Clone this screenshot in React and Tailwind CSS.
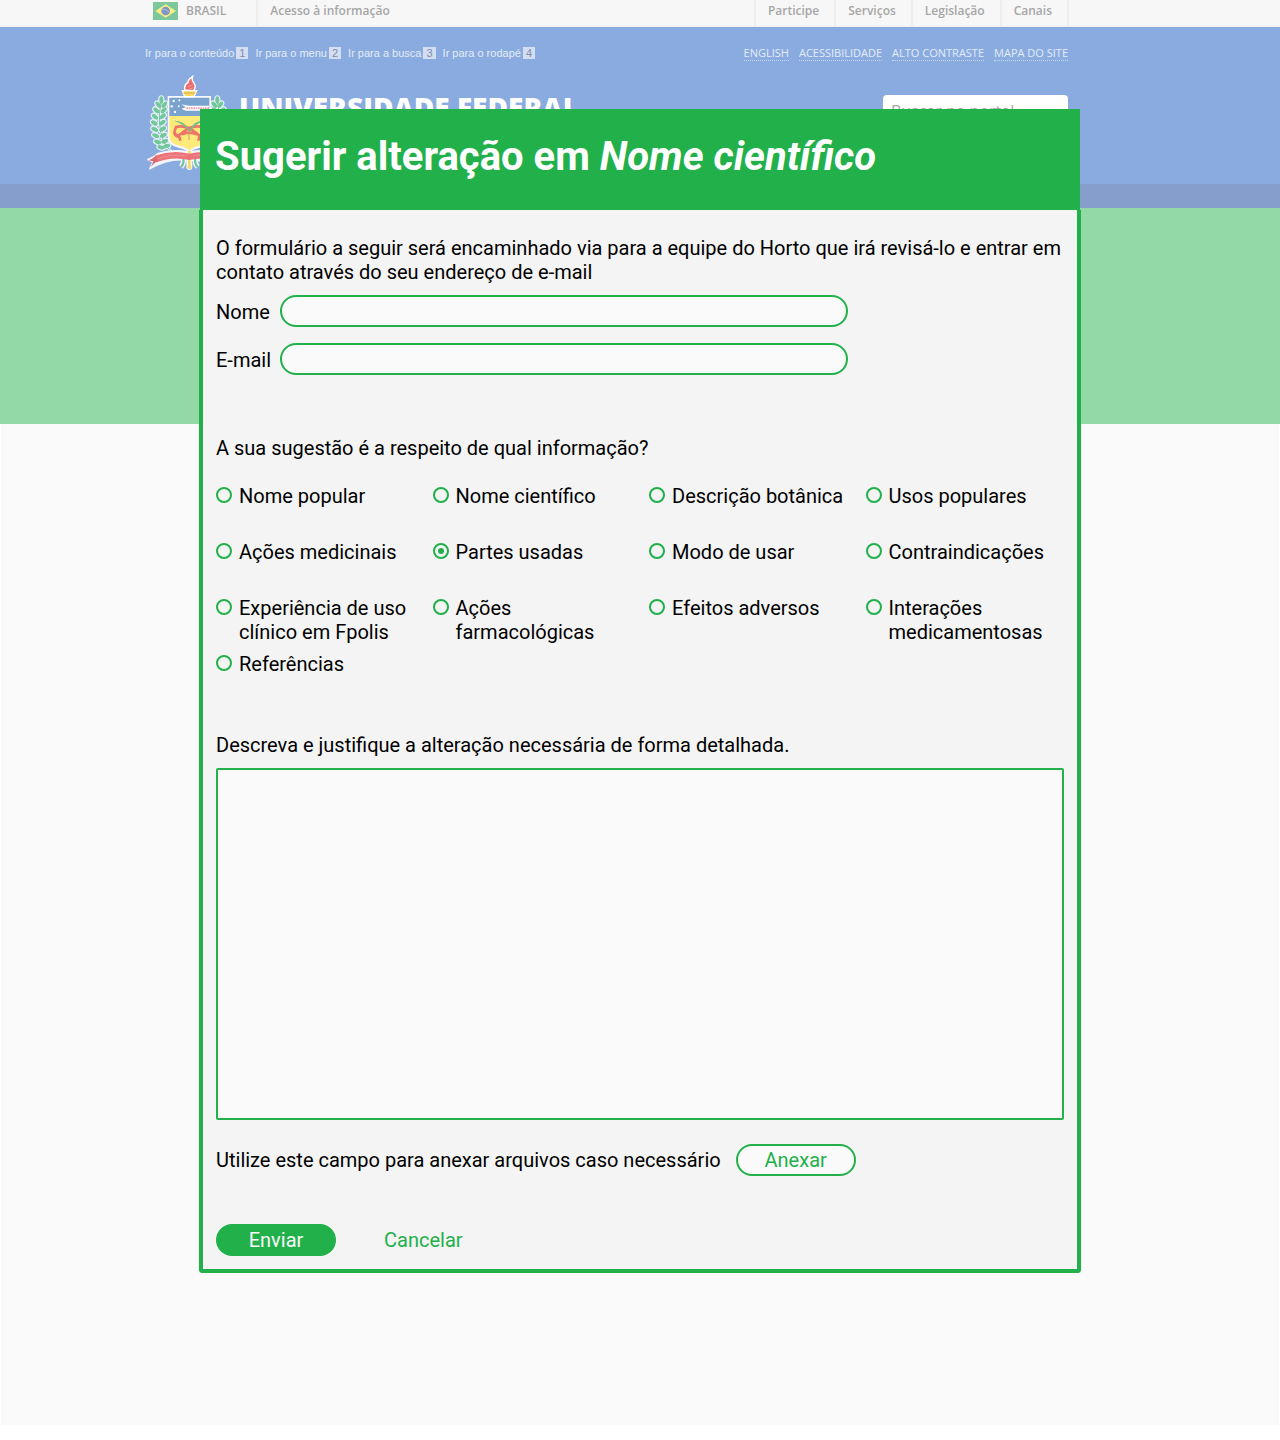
import React from "react";

const topics = [
  "Nome popular",
  "Nome científico",
  "Descrição botânica",
  "Usos populares",
  "Ações medicinais",
  "Partes usadas",
  "Modo de usar",
  "Contraindicações",
  "Experiência de uso clínico em Fpolis",
  "Ações farmacológicas",
  "Efeitos adversos",
  "Interações medicamentosas",
  "Referências",
];

const skipLinks = ["Ir para o conteúdo", "Ir para o menu", "Ir para a busca", "Ir para o rodapé"];
const govLinks = ["Participe", "Serviços", "Legislação", "Canais"];
const siteLinks = ["ENGLISH", "ACESSIBILIDADE", "ALTO CONTRASTE", "MAPA DO SITE"];

function Flag() {
  return (
    <svg width="25" height="18" viewBox="0 0 75 54" aria-hidden="true">
      <rect width="75" height="54" fill="#7cc79c" />
      <path d="M38 7 L69 27 L38 47 L7 27 Z" fill="#f9ee84" />
      <circle cx="38" cy="27" r="13" fill="#7f95c4" />
      <path d="M26 22 Q40 20 50 32" stroke="#a9b8d6" strokeWidth="3" fill="none" />
    </svg>
  );
}

const leaves = [
  [97, 102, 90], [88, 116, 50], [106, 116, 130], [82, 133, 45], [104, 133, 135],
  [78, 152, 40], [101, 151, 140], [76, 171, 35], [100, 170, 145], [77, 190, 30],
  [101, 189, 150], [80, 209, 25], [103, 208, 155], [86, 228, 20], [107, 226, 160],
  [96, 244, 15], [113, 240, 165],
];

function Crest() {
  return (
    <svg width="82" height="97" viewBox="48 27 246 291" className="shrink-0" aria-hidden="true">
      <g id="branch">
        <g fill="#e9f1f6" stroke="#e9f1f6" strokeWidth="7">
          {leaves.map(([x, y, r]) => (
            <ellipse key={`o${x}-${y}`} cx={x} cy={y} rx="11" ry="6" transform={`rotate(${r} ${x} ${y})`} />
          ))}
        </g>
        <path d="M97 104 Q82 175 104 226 Q112 245 128 256" fill="none" stroke="#e9f1f6" strokeWidth="8" />
        <path d="M97 104 Q82 175 104 226 Q112 245 128 256" fill="none" stroke="#79c7a2" strokeWidth="3" />
        <g fill="#72c79c">
          {leaves.map(([x, y, r]) => (
            <ellipse key={`i${x}-${y}`} cx={x} cy={y} rx="11" ry="6" transform={`rotate(${r} ${x} ${y})`} />
          ))}
        </g>
      </g>
      <use href="#branch" transform="translate(362 0) scale(-1 1)" />
      <path d="M56 281 Q75 273 88 262 Q130 248 181 258 Q232 248 274 262 Q287 273 306 281 L292 286 L298 305 Q270 285 240 286 L181 283 Q120 274 62 309 L72 288 Z" fill="#f4f6fb" stroke="#f4f6fb" strokeWidth="4" strokeLinejoin="round" />
      <path d="M116 90 H246 V214 Q244 240 214 245 Q190 250 181 262 Q172 250 148 245 Q118 240 116 214 Z" fill="#f6f8fb" />
      <path d="M121 95 H241 V150 H121 Z" fill="#7ba3cf" />
      <path d="M121 150 H241 V212 Q238 235 210 239 Q190 243 181 254 Q172 243 152 239 Q124 235 121 212 Z" fill="#fdea7a" />
      <g fill="#fff">
        <circle cx="134" cy="105" r="3.5" />
        <circle cx="128" cy="121" r="3.5" />
        <circle cx="151" cy="103" r="3" />
        <circle cx="149" cy="121" r="3" />
        <circle cx="138" cy="138" r="3.5" />
        <path d="M157 115 L178 119 H241 V134 H170 L157 128 L171 124 Z" />
      </g>
      <path d="M172 127 H240" stroke="#e9a5b1" strokeWidth="6" strokeDasharray="5 2" />
      <g fill="none" stroke="#ee7469" strokeWidth="8">
        <path d="M139 184 Q170 173 202 202 Q216 215 222 202" />
        <path d="M222 184 Q190 173 158 202 Q143 215 137 200" />
        <path d="M143 181 Q129 203 144 211 Q150 205 154 224" />
        <path d="M218 181 Q232 203 217 211 Q212 205 208 224" />
        <path d="M158 205 Q181 195 204 205" />
      </g>
      <path d="M134 164 Q165 163 181 192 Q196 162 226 164 Q198 174 181 197 Q163 172 134 164 Z" fill="#74be8c" />
      <path d="M180 192 V222" stroke="#c1a06a" strokeWidth="3" />
      <path d="M168 92 L164 85 L160 74 H203 L198 85 L194 92 Z" fill="#f7d95d" stroke="#fff" strokeWidth="4" />
      <path d="M163 81 H199" stroke="#dda957" strokeWidth="3" />
      <path d="M168 72 Q163 58 177 49 Q176 41 191 31 Q187 44 195 51 Q203 64 193 74 Z" fill="#ed7774" stroke="#fff" strokeWidth="4" />
      <path d="M173 70 Q168 57 182 52 Q188 47 187 40 Q186 52 192 56 Q198 65 190 71 Z" fill="#e9696d" />
      <path d="M176 63 L190 57 M179 70 L193 65" stroke="#f7b4ae" strokeWidth="2" />
      <path d="M163 279 Q166 292 156 303 M199 279 Q196 292 206 303" stroke="#f4f6fb" strokeWidth="15" fill="none" />
      <path d="M163 279 Q166 292 156 303 M199 279 Q196 292 206 303" stroke="#72c79c" strokeWidth="7" fill="none" />
      <path d="M181 272 V303" stroke="#f4f6fb" strokeWidth="18" strokeLinecap="round" />
      <path d="M181 255 V300" stroke="#f4dc64" strokeWidth="8" />
      <circle cx="181" cy="303" r="6" fill="#f4dc64" />
      <path d="M77 269 Q130 251 181 263 Q232 251 285 269 L281 289 Q232 270 181 282 Q130 270 82 289 Z" fill="#ec7378" />
      <path d="M86 279 Q130 262 170 270 M192 270 Q232 262 276 279" stroke="#f3a3a8" strokeWidth="3" strokeDasharray="4 2" fill="none" />
      <path d="M58 283 Q70 280 79 271 L90 284 Q75 289 66 303 L73 286 Z" fill="#df686f" />
    </svg>
  );
}

function Field({ id, label, type }) {
  return (
    <div className="flex h-8 items-center">
      <label htmlFor={id} className="w-16 shrink-0 pt-0.5">{label}</label>
      <input
        id={id}
        type={type}
        className="h-8 w-full max-w-[568px] rounded-full border-2 border-[#22b04b] bg-[#fafafa] px-4 outline-none"
      />
    </div>
  );
}

function SiteBackground() {
  return (
    <div className="font-['Open_Sans',sans-serif]">
      <nav className="flex h-[27px] items-start justify-between overflow-hidden border-b border-[#f0f0f0] bg-[#f7f7f7] pl-[153px] pr-[211px] text-xs font-semibold text-[#a6a6a6]">
        <div className="flex h-full">
          <a href="#brasil" className="flex items-start gap-2 pr-[30px] pt-0.5">
            <Flag />
            <span className="leading-[18px]">BRASIL</span>
          </a>
          <a href="#acesso" className="border-l-2 border-[#eeeeee] pl-3 leading-[22px]">Acesso à informação</a>
        </div>
        <div className="flex h-full border-r-2 border-[#eeeeee]">
          {govLinks.map((t) => (
            <a key={t} href={`#${t}`} className="border-l-2 border-[#eeeeee] pl-3 pr-[15px] leading-[22px]">{t}</a>
          ))}
        </div>
      </nav>
      <header className="h-[157px] overflow-hidden bg-[#8aabdf] pl-[145px] pr-[212px] pt-[18px] text-[#e3ebf8]">
        <div className="flex h-4 items-center justify-between text-[11px] leading-4">
          <div className="flex gap-[7px] font-['Liberation_Sans',sans-serif]">
            {skipLinks.map((t, i) => (
              <a key={t} href={`#skip-${i + 1}`} className="flex items-center gap-[2px]">
                {t}
                <span className="bg-[#d3def3] px-[3px] leading-3 text-[#7f8cab]">{i + 1}</span>
              </a>
            ))}
          </div>
          <div className="flex gap-[10px] leading-[14px]">
            {siteLinks.map((t) => (
              <a key={t} href={`#${t}`} className="border-b border-dotted border-[#c9d8f1]">{t}</a>
            ))}
          </div>
        </div>
        <div className="flex items-start justify-between pt-[14px]">
          <div className="flex gap-3">
            <Crest />
            <p className="pt-[14px] text-[28px] font-extrabold leading-9 text-[#fdfdfe]">UNIVERSIDADE FEDERAL</p>
          </div>
          <input
            type="search"
            aria-label="Buscar no portal"
            placeholder="Buscar no portal"
            className="mt-5 h-8 w-[185px] rounded bg-white px-2 text-base placeholder:text-[#a6a6a6]"
          />
        </div>
      </header>
      <div className="h-6 bg-[#869ecb]" />
      <div className="h-[216px] bg-[#92d9a6]" />
      <div className="mx-px h-[1001px] bg-[#fafafa]" />
    </div>
  );
}

export default function App() {
  return (
    <div className="relative min-h-screen overflow-hidden bg-white">
      <SiteBackground />
      <div
        role="dialog"
        aria-labelledby="dialog-title"
        className="absolute inset-x-0 top-[109px] mx-auto w-full max-w-[882px] font-['Roboto',sans-serif] text-xl leading-6 text-black"
      >
        <h1 id="dialog-title" className="mx-px bg-[#22b04b] px-[15px] pb-[29px] pt-6 text-[40px] font-bold leading-12 text-white">
          Sugerir alteração em <em>Nome científico</em>
        </h1>
        <form className="rounded-b-sm border-4 border-t-0 border-[#22b04b] bg-[#f4f4f4] px-[13px] pb-[13px] pt-[26px]" onSubmit={(e) => e.preventDefault()}>
          <p>
            O formulário a seguir será encaminhado via para a equipe do Horto que irá revisá-lo e entrar em contato
            através do seu endereço de e-mail
          </p>
          <div className="mt-[11px] flex flex-col gap-4">
            <Field id="nome" label="Nome" type="text" />
            <Field id="email" label="E-mail" type="email" />
          </div>
          <fieldset className="mt-[61px]">
            <legend>A sua sugestão é a respeito de qual informação?</legend>
            <div className="mt-6 grid auto-rows-[56px] grid-cols-4 gap-x-[18px]">
              {topics.map((t) => (
                <label key={t} className="flex items-start gap-[7px]">
                  <input
                    type="radio"
                    name="topico"
                    defaultChecked={t === "Partes usadas"}
                    className="mt-[3px] size-4 shrink-0 appearance-none rounded-full border-2 border-[#22b04b] bg-clip-content p-[3px] checked:bg-[#22b04b]"
                  />
                  <span>{t}</span>
                </label>
              ))}
            </div>
          </fieldset>
          <label htmlFor="descricao" className="mt-[25px] block">
            Descreva e justifique a alteração necessária de forma detalhada.
          </label>
          <textarea
            id="descricao"
            className="mt-[11px] block h-[352px] w-full resize-none rounded-[2px] border-2 border-[#22b04b] bg-[#fafafa] p-2 outline-none"
          />
          <div className="mt-6 flex items-center gap-[15px]">
            <span>Utilize este campo para anexar arquivos caso necessário</span>
            <button type="button" className="h-8 w-[120px] rounded-full border-2 border-[#22b04b] bg-[#fafafa] text-[#22b04b]">
              Anexar
            </button>
          </div>
          <div className="mt-12 flex items-center gap-12">
            <button type="submit" className="h-8 w-[120px] rounded-full bg-[#22b04b] text-[#fafafa]">Enviar</button>
            <button type="button" className="text-[#22b04b]">Cancelar</button>
          </div>
        </form>
      </div>
    </div>
  );
}
